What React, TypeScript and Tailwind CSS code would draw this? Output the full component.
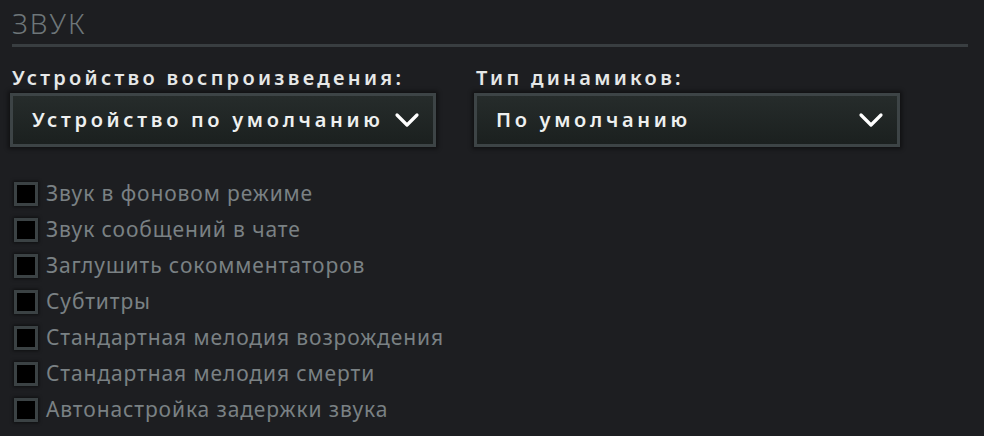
const options = [
  'Звук в фоновом режиме',
  'Звук сообщений в чате',
  'Заглушить сокомментаторов',
  'Субтитры',
  'Стандартная мелодия возрождения',
  'Стандартная мелодия смерти',
  'Автонастройка задержки звука',
];

const Chevron = () => (
  <svg width="26" height="16" viewBox="0 0 26 16" fill="none">
    <path d="M3 3 L13 13 L23 3" stroke="#ffffff" strokeWidth="3.2" strokeLinecap="round" strokeLinejoin="round" />
  </svg>
);

const Dropdown = ({ label, value }: { label: string; value: string }) => (
  <div className="flex flex-col w-[426px]">
    <div className="pl-[2px] text-[20px] leading-[22px] font-semibold tracking-[3.3px] text-[#e6e8e8] whitespace-nowrap">{label}</div>
    <div className="mt-[4px] h-[54px] border-[3px] border-[#3d4446] bg-gradient-to-b from-[#262c2b] to-[#1b201f] shadow-[0_0_4px_2px_rgba(0,0,0,0.45)] flex items-center justify-between pl-[19px] pr-[13px]">
      <span className="text-[20px] font-semibold tracking-[3.7px] text-[#eef0f0] whitespace-nowrap">{value}</span>
      <Chevron />
    </div>
  </div>
);

export default function App() {
  return (
    <div className="w-[984px] h-[436px] bg-[#1d1e21] overflow-hidden font-['Noto_Sans',sans-serif] pl-[12px] pr-[16px]">
      <div className="pt-[6px] text-[28px] leading-[34px] font-light tracking-[2px] text-[#6e7679]">ЗВУК</div>
      <div className="mt-[4px] h-[3px] bg-[#393e41]" />
      <div className="mt-[20px] -ml-[2px] flex gap-[38px]">
        <Dropdown label="Устройство воспроизведения:" value="Устройство по умолчанию" />
        <Dropdown label="Тип динамиков:" value="По умолчанию" />
      </div>
      <div className="mt-[35px] flex flex-col gap-[12px]">
        {options.map((o) => (
          <div key={o} className="flex items-center h-[24px]">
            <div className="ml-[2px] w-[24px] h-[24px] border-[3px] border-[#3b4244] bg-black shadow-[0_0_3px_1px_rgba(0,0,0,0.5)]" />
            <span className="ml-[8px] text-[21px] tracking-[0.9px] text-[#7a8184] whitespace-nowrap">{o}</span>
          </div>
        ))}
      </div>
    </div>
  );
}
